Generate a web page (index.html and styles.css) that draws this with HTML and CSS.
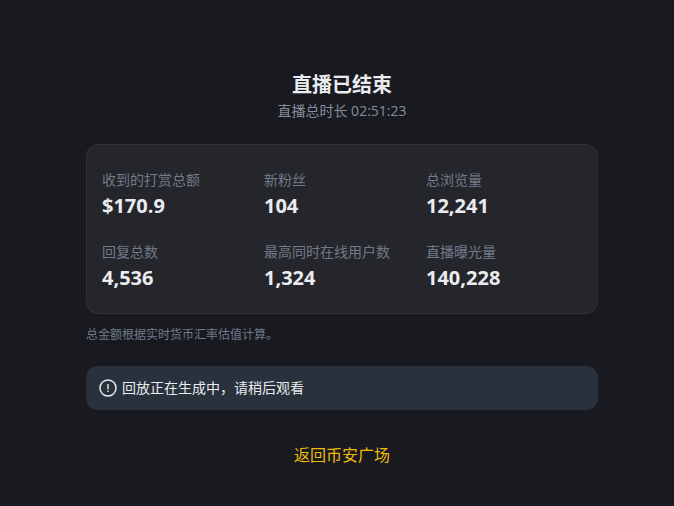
FILE: index.html
```html
<!DOCTYPE html>
<html lang="zh-CN">
<head>
<meta charset="utf-8">
<meta name="viewport" content="width=device-width, initial-scale=1">
<title>直播已结束</title>
<link rel="stylesheet" href="styles.css">
</head>
<body>
<main class="summary">
  <h1 class="title">直播已结束</h1>
  <p class="duration">直播总时长 02:51:23</p>
  <dl class="stats">
    <div class="stat"><dt>收到的打赏总额</dt><dd>$170.9</dd></div>
    <div class="stat"><dt>新粉丝</dt><dd>104</dd></div>
    <div class="stat"><dt>总浏览量</dt><dd>12,241</dd></div>
    <div class="stat"><dt>回复总数</dt><dd>4,536</dd></div>
    <div class="stat"><dt>最高同时在线用户数</dt><dd>1,324</dd></div>
    <div class="stat"><dt>直播曝光量</dt><dd>140,228</dd></div>
  </dl>
  <p class="note">总金额根据实时货币汇率估值计算。</p>
  <div class="notice" role="status">
    <svg class="notice-icon" viewBox="0 0 20 20" aria-hidden="true">
      <circle cx="10" cy="10" r="8" fill="none" stroke="currentColor" stroke-width="1.5"/>
      <path d="M9.3 6h1.4v5.2H9.3zM9.3 12.4h1.4v1.5H9.3z" fill="currentColor"/>
    </svg>
    <span>回放正在生成中，请稍后观看</span>
  </div>
  <a class="back" href="#">返回币安广场</a>
</main>
</body>
</html>
```
FILE: styles.css
```css
body {
  margin: 0;
  background: #181a20;
  color: #eaecef;
  font-family: "Open Sans", "Noto Sans CJK SC", sans-serif;
  font-size: 14px;
  line-height: 22px;
}

.summary {
  display: flex;
  flex-direction: column;
  padding: 69px 76px 36px 86px;
}

.title {
  margin: 0;
  font-size: 20px;
  font-weight: 700;
  line-height: 32px;
  text-align: center;
}

.duration {
  margin: 0 0 23px;
  color: #848e9c;
  line-height: 20px;
  text-align: center;
}

.stats {
  display: grid;
  grid-template-columns: repeat(3, 1fr);
  row-gap: 20px;
  margin: 0;
  padding: 24px 9px 20px 15px;
  border: 1px solid #2f3239;
  border-radius: 12px;
  background: #25262b;
}

.stat dt {
  color: #707a8a;
}

.stat dd {
  margin: 0;
  font-size: 20px;
  font-weight: 700;
  line-height: 30px;
}

.note {
  margin: 10px 0 20px;
  color: #707a8a;
  font-size: 12px;
}

.notice {
  display: flex;
  align-items: center;
  gap: 4px;
  padding: 11px 12px;
  border-radius: 12px;
  background: #29313d;
}

.notice-icon {
  width: 20px;
  height: 20px;
}

.back {
  align-self: center;
  margin-top: 32px;
  color: #f0b90b;
  font-size: 16px;
  line-height: 26px;
  text-decoration: none;
}
```
